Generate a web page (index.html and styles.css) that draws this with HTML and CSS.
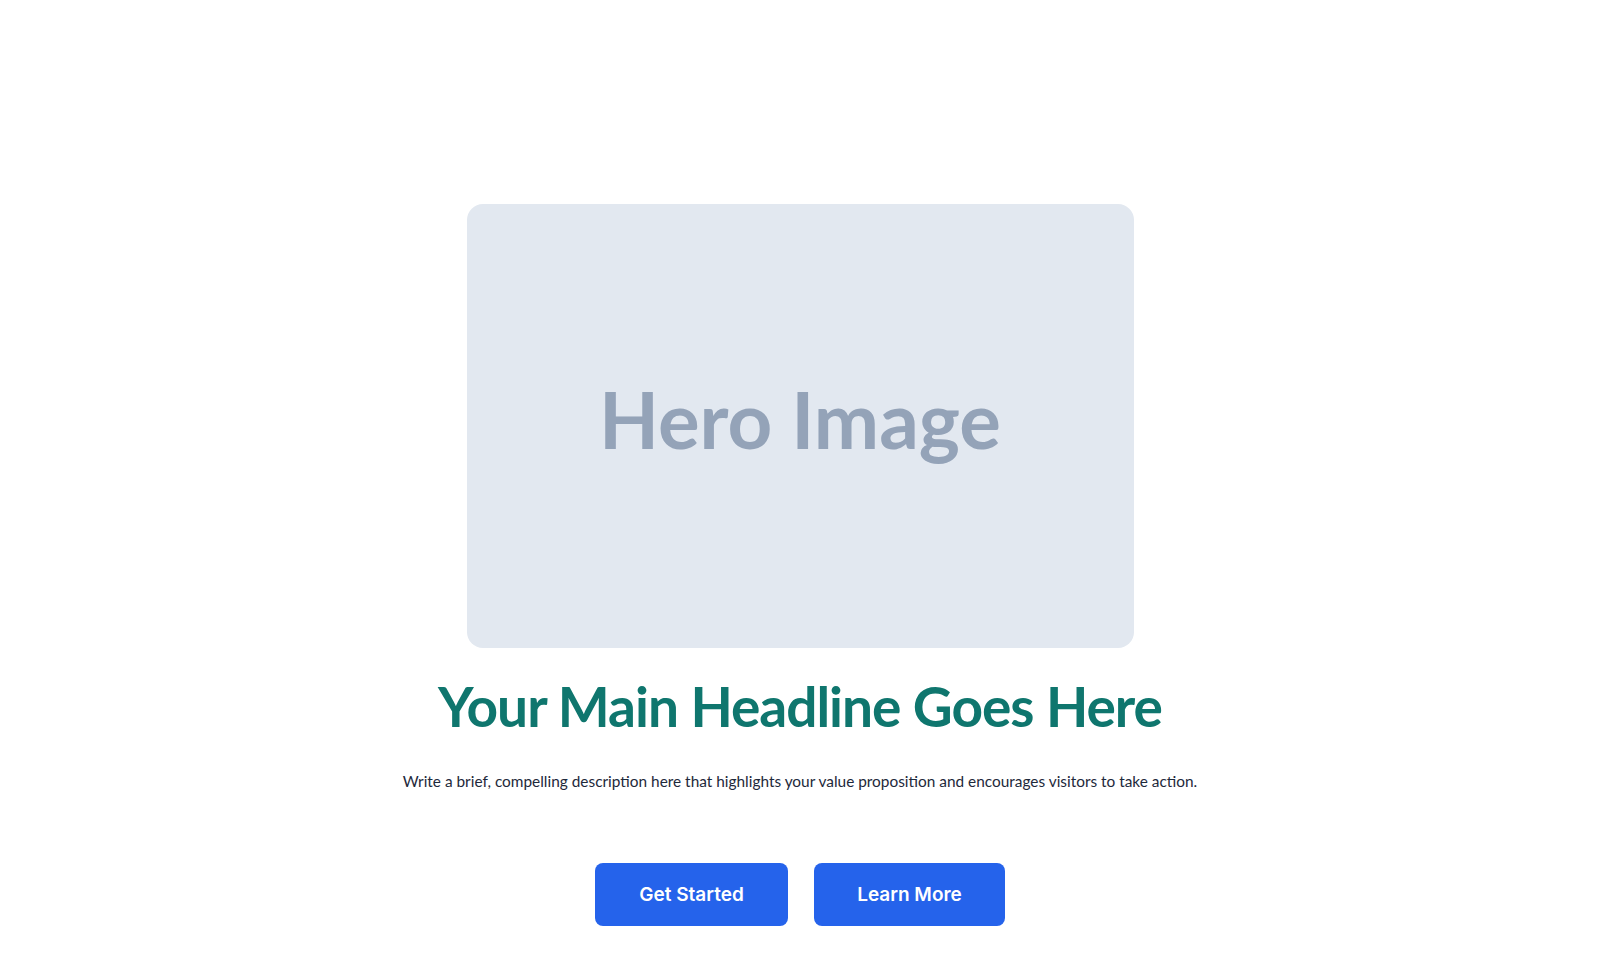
FILE: index.html
```html
<!DOCTYPE html>
<html lang="en">
<head>
    <meta charset="UTF-8">
    <meta name="viewport" content="width=device-width, initial-scale=1.0">
    <title>Hero</title>
    <link rel="stylesheet" href="styles.css">
</head>
<body>
    <main class="hero">
        <div class="hero-img">Hero Image</div>
        <h1 class="headline">Your Main Headline Goes Here</h1>
        <p class="desc">Write a brief, compelling description here that highlights your value proposition and encourages visitors to take action.</p>
        <div class="actions">
            <a href="" class="btn btn-start">Get Started</a>
            <a href="" class="btn btn-more">Learn More</a>
        </div>
    </main>
</body>
</html>
```

FILE: styles.css
```css
body,h1,p{
    margin: 0;
    padding: 0;
}
body{
    background: #fff;
    font-family: Inter, "Noto Sans", sans-serif;
    color: #1e293b;
}
a{
    text-decoration: none;
}
.hero{
    display: flex;
    flex-direction: column;
    align-items: center;
    padding-top: 204px;
}
.hero-img{
    width: 667px;
    height: 444px;
    box-sizing: border-box;
    padding-bottom: 14px;
    background: #e2e8f0;
    border-radius: 16px;
    display: flex;
    align-items: center;
    justify-content: center;
    font-family: Lato, sans-serif;
    font-weight: 700;
    font-size: 78px;
    color: #94a3b8;
}
.headline{
    margin-top: 22px;
    font-family: Lato, sans-serif;
    font-size: 55px;
    line-height: 72px;
    font-weight: 700;
    letter-spacing: -1px;
    color: #0f766e;
}
.desc{
    margin-top: 27px;
    font-family: Lato, sans-serif;
    font-size: 15.4px;
    line-height: 24px;
}
.actions{
    display: flex;
    gap: 26px;
    margin-top: 70px;
}
.btn{
    display: flex;
    align-items: center;
    justify-content: center;
    height: 63px;
    border-radius: 8px;
    background: #2563eb;
    color: #fff;
    font-size: 19px;
    font-weight: 600;
}
.btn-start{
    width: 193px;
}
.btn-more{
    width: 191px;
}
```
